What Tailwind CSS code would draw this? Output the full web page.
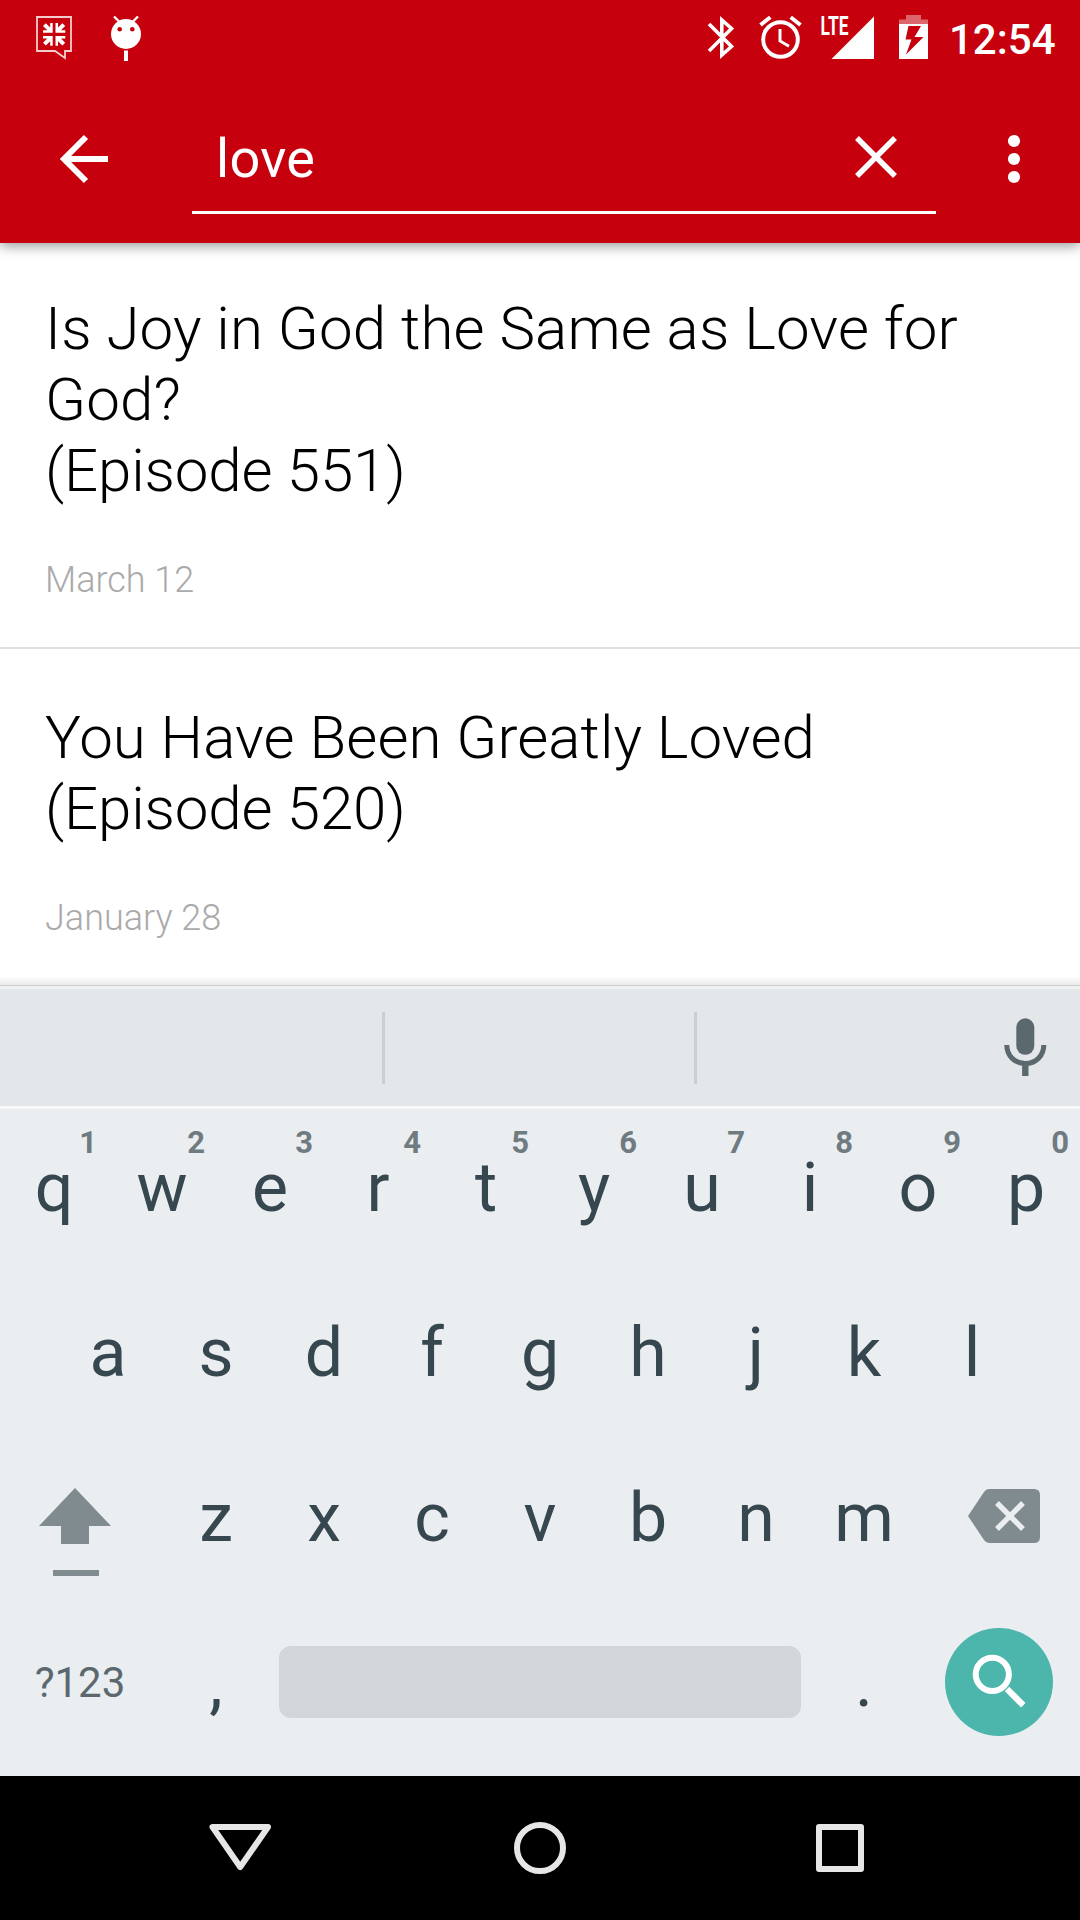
<!DOCTYPE html>
<html lang="en">

<head>
    <meta charset="UTF-8">
    <meta name="viewport" content="width=device-width, initial-scale=1.0">
    <title>Search - love</title>
    <script src="https://cdn.jsdelivr.net/npm/@tailwindcss/browser@4"></script>
</head>

<body class="w-[1080px] h-[1920px] overflow-hidden flex flex-col bg-white font-['Roboto',sans-serif]">
    <!-- Status bar + toolbar -->
    <header class="relative z-10 h-[243px] shrink-0 bg-[#c6000d] text-white shadow-[0_3px_12px_rgba(0,0,0,0.4)]">
        <div class="h-[72px] flex justify-between">
            <svg class="w-[160px] h-[72px]" viewBox="0 0 160 72" fill="none">
                <path d="M37 17H71V51H65V58L55 51H37Z" stroke="#fff" stroke-opacity=".8" stroke-width="1.8" />
                <path fill="#fff" d="M52.7 23V32.7H43V30.2H47.3L43 26L45.8 23.2L50.2 27.5V23ZM55.5 23V32.7H65.3V30.2H61L65.2 26L62.4 23.2L58 27.5V23ZM52.7 45.7V36H43V38.5H47.3L43 42.7L45.8 45.5L50.2 41.2V45.7ZM55.5 45.7V36H65.3V38.5H61L65.2 42.7L62.4 45.5L58 41.2V45.7Z" />
                <circle cx="126" cy="34" r="15" fill="#fff" />
                <path d="M114 16.5L119 21.5M138 16.5L133 21.5" stroke="#fff" stroke-width="2.4" />
                <circle cx="119.7" cy="29.3" r="2.3" fill="#c6000d" />
                <circle cx="132.3" cy="29.3" r="2.3" fill="#c6000d" />
                <path d="M126 50.5V61" stroke="#fff" stroke-width="4" />
            </svg>
            <div class="flex">
                <svg class="w-[250px] h-[72px]" viewBox="690 0 250 72" fill="none">
                    <!-- bluetooth -->
                    <path d="M709 24L731.5 46.5L721.8 55V20L731.5 28.5L709 51" stroke="#fff" stroke-width="3.6" />
                    <!-- alarm -->
                    <circle cx="780.5" cy="39.5" r="17.3" stroke="#fff" stroke-width="4" />
                    <path d="M780 29V41L789 46.3" stroke="#fff" stroke-width="3" />
                    <path d="M760.5 25L770.3 17.2M800.5 25L790.7 17.2" stroke="#fff" stroke-width="4" />
                    <!-- signal -->
                    <path d="M874 16.5V59H831.5Z" fill="#fff" />
                    <text x="820.5" y="35.3" fill="#fff" font-family="Roboto" font-weight="700" font-size="25" textLength="28" lengthAdjust="spacingAndGlyphs">LTE</text>
                    <!-- battery -->
                    <path d="M899 24V19.5H906V15H921V19.5H928V24Z" fill="#fff" fill-opacity=".4" />
                    <path fill="#fff" fill-rule="evenodd" d="M899 24H928V59H899ZM908.5 26L905.5 39.5H911.5L906 54.5L923.5 37H914.5L921 26Z" />
                </svg>
                <span class="w-[140px] pl-[9px] text-[42px] leading-[79px] font-medium">12:54</span>
            </div>
        </div>
        <div class="flex h-[171px]">
            <svg class="w-[192px] h-[171px]" viewBox="0 72 192 171" fill="none" stroke="#fff" stroke-width="6">
                <path d="M86 137L64 159L86 181M64 159H108" />
            </svg>
            <div class="w-[744px] h-[142px] border-b-[3px] border-white flex justify-between pl-6">
                <span class="text-[54px] leading-[174px] tracking-[0.3px]">love</span>
                <svg class="w-[120px] h-[139px]" viewBox="816 72 120 139" stroke="#fff" stroke-width="5.5">
                    <path d="M857 138L895 176M895 138L857 176" />
                </svg>
            </div>
            <svg class="w-[144px] h-[171px]" viewBox="936 72 144 171" fill="#fff">
                <circle cx="1014" cy="141" r="6.1" />
                <circle cx="1014" cy="159" r="6.1" />
                <circle cx="1014" cy="177" r="6.1" />
            </svg>
        </div>
    </header>

    <!-- Results -->
    <main class="h-[743px] shrink-0 overflow-hidden font-light text-black">
        <article class="h-[406px] px-[45px] pt-[50px] border-b-2 border-[#e0e0e0]">
            <h2 class="text-[60px] leading-[71px] tracking-[0.13px]">Is Joy in God the Same as Love for God?<br><span class="tracking-[-0.14px]">(Episode 551)</span></h2>
            <p class="mt-[53px] text-[36px] leading-[42px] text-[#aaa]">March 12</p>
        </article>
        <article class="h-[337px] px-[45px] pt-[53px] border-b border-[#ccc]">
            <h2 class="text-[60px] leading-[71px] tracking-[0.09px]">You Have Been Greatly Loved<br><span class="tracking-[-0.14px]">(Episode 520)</span></h2>
            <p class="mt-[53px] text-[36px] leading-[42px] text-[#aaa]">January 28</p>
        </article>
    </main>

    <!-- Keyboard -->
    <section class="relative h-[790px] shrink-0 bg-[#ebeef1] text-[#37474f] text-[68px] leading-[159px] text-center">
        <div class="absolute inset-x-0 -top-[10px] h-[9px] bg-linear-to-b from-black/0 to-black/8"></div>
        <div class="h-[123px] flex items-center bg-[#e3e7e9] border-t-[3px] border-t-[#eff1f2] border-b-[3px] border-b-[#f5f7f9]">
            <div class="w-[385px] h-[72px] border-r-[3px] border-[#cacfd1]"></div>
            <div class="w-[312px] h-[72px] border-r-[3px] border-[#cacfd1]"></div>
            <svg class="ml-auto w-[110px] h-[117px]" viewBox="970 989 110 117" fill="none" stroke="#5b696f">
                <rect x="1016.3" y="1018.3" width="18" height="36.5" rx="9" fill="#5b696f" stroke="none" />
                <path d="M1006.8 1045C1006.8 1056 1015 1063.5 1025.3 1063.5S1043.8 1056 1043.8 1045" stroke-width="5" />
                <path d="M1025.3 1063V1076" stroke-width="6.4" />
            </svg>
        </div>

        <div class="h-[165px] flex">
            <div class="relative w-[108px]">q<span class="absolute top-4 right-[11px] text-[31px] leading-9 font-bold text-[#6f7b80]">1</span></div>
            <div class="relative w-[108px]">w<span class="absolute top-4 right-[11px] text-[31px] leading-9 font-bold text-[#6f7b80]">2</span></div>
            <div class="relative w-[108px]">e<span class="absolute top-4 right-[11px] text-[31px] leading-9 font-bold text-[#6f7b80]">3</span></div>
            <div class="relative w-[108px]">r<span class="absolute top-4 right-[11px] text-[31px] leading-9 font-bold text-[#6f7b80]">4</span></div>
            <div class="relative w-[108px]">t<span class="absolute top-4 right-[11px] text-[31px] leading-9 font-bold text-[#6f7b80]">5</span></div>
            <div class="relative w-[108px]">y<span class="absolute top-4 right-[11px] text-[31px] leading-9 font-bold text-[#6f7b80]">6</span></div>
            <div class="relative w-[108px]">u<span class="absolute top-4 right-[11px] text-[31px] leading-9 font-bold text-[#6f7b80]">7</span></div>
            <div class="relative w-[108px]">i<span class="absolute top-4 right-[11px] text-[31px] leading-9 font-bold text-[#6f7b80]">8</span></div>
            <div class="relative w-[108px]">o<span class="absolute top-4 right-[11px] text-[31px] leading-9 font-bold text-[#6f7b80]">9</span></div>
            <div class="relative w-[108px]">p<span class="absolute top-4 right-[11px] text-[31px] leading-9 font-bold text-[#6f7b80]">0</span></div>
        </div>

        <div class="h-[165px] flex justify-center">
            <div class="w-[108px]">a</div>
            <div class="w-[108px]">s</div>
            <div class="w-[108px]">d</div>
            <div class="w-[108px]">f</div>
            <div class="w-[108px]">g</div>
            <div class="w-[108px]">h</div>
            <div class="w-[108px]">j</div>
            <div class="w-[108px]">k</div>
            <div class="w-[108px]">l</div>
        </div>

        <div class="h-[165px] flex">
            <svg class="w-[162px] h-[165px]" viewBox="0 1439 162 165" fill="#808b8f">
                <path d="M75 1488L111 1526H89V1544H61V1526H39Z" />
                <path d="M53 1570H99V1576H53Z" />
            </svg>
            <div class="w-[108px]">z</div>
            <div class="w-[108px]">x</div>
            <div class="w-[108px]">c</div>
            <div class="w-[108px]">v</div>
            <div class="w-[108px]">b</div>
            <div class="w-[108px]">n</div>
            <div class="w-[108px]">m</div>
            <svg class="w-[162px] h-[165px]" viewBox="918 1439 162 165">
                <path fill="#808b8f" d="M989 1489H1034Q1040 1489 1040 1495V1537Q1040 1543 1034 1543H989Q986 1543 984 1540L968 1516L984 1492Q986 1489 989 1489Z" />
                <path d="M997 1503L1023 1529M1023 1503L997 1529" stroke="#ebeef1" stroke-width="5.4" />
            </svg>
        </div>

        <div class="h-[165px] flex">
            <div class="w-[162px] pr-[2px] text-[42px] leading-[157px] text-[#5b696f]">?123</div>
            <div class="w-[108px]">,</div>
            <div class="w-[540px] px-[9px] pt-[42px]">
                <div class="h-[72px] rounded-[12px] bg-[#d1d6d9]"></div>
            </div>
            <div class="w-[108px]">.</div>
            <svg class="w-[162px] h-[165px]" viewBox="918 1604 162 165" fill="none" stroke="#fff">
                <circle cx="999" cy="1682" r="54" fill="#4db6ac" stroke="none" />
                <circle cx="992.3" cy="1674.3" r="16.6" stroke-width="6" />
                <path d="M1007 1689L1023.3 1705.3" stroke-width="6.2" />
            </svg>
        </div>
    </section>

    <!-- Navigation bar -->
    <nav class="h-[144px] shrink-0 bg-black">
        <svg class="w-full h-full" viewBox="0 1776 1080 144" fill="none" stroke="#e6e6e6" stroke-width="6" stroke-linejoin="round">
            <path d="M212.500 1827H268L240.200 1867Z" />
            <circle cx="540" cy="1848" r="23" />
            <rect x="819" y="1827" width="42" height="42" />
        </svg>
    </nav>
</body>

</html>
